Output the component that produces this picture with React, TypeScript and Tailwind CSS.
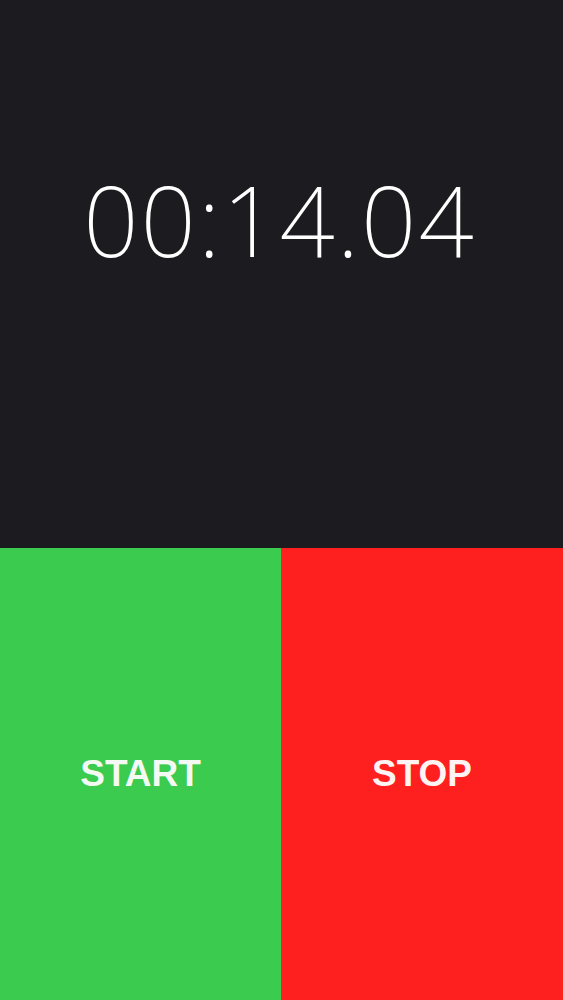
export default function App() {
  return (
    <div className="flex h-[1000px] w-full flex-col bg-[#1c1b1f]">
      <div className="flex h-[548px] justify-center pt-[171px]">
        <span className="pr-[4px] font-['Noto_Sans',sans-serif] text-[97px] font-extralight leading-none tracking-[2px] text-white">
          00:14.04
        </span>
      </div>
      <div className="flex flex-1">
        <button className="flex w-[281px] items-center justify-center bg-[#3bcb4e] font-['Liberation_Sans',Arial,sans-serif] text-[37px] font-bold text-[#f4f9f4]">
          START
        </button>
        <button className="flex flex-1 items-center justify-center bg-[#fe1f1f] font-['Liberation_Sans',Arial,sans-serif] text-[37px] font-bold text-[#fff4f4]">
          STOP
        </button>
      </div>
    </div>
  )
}
